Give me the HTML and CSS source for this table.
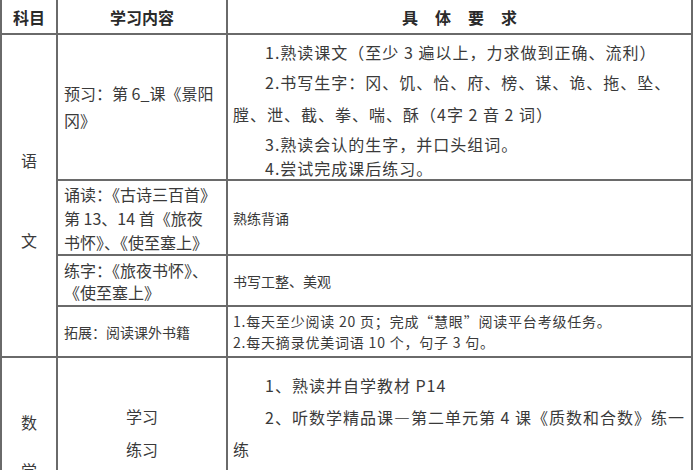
FILE: index.html
```
<!DOCTYPE html>
<html lang="zh-CN">
<head>
<meta charset="utf-8">
<title>学习内容</title>
<link rel="stylesheet" href="styles.css">
</head>
<body>
<div class="sheet">
  <div class="cell head c1">科目</div>
  <div class="cell head c2">学习内容</div>
  <div class="cell head c3 spaced">具体要求</div>

  <div class="cell subject yuwen"><span>语</span><span>文</span></div>

  <div class="cell left r1"><p class="lh27">预习：第 6_课《景阳<br>冈》</p></div>
  <div class="cell right r1">
    <p class="p1 ind">1.熟读课文（至少 3 遍以上，力求做到正确、流利）</p>
    <p class="p2"><span class="ind">2.书写生字：冈、饥、恰、府、榜、谋、诡、拖、坠、</span><br>膛、泄、截、拳、喘、酥（4字 2 音 2 词）</p>
    <p class="p3 ind">3.熟读会认的生字，并口头组词。</p>
    <p class="p4 ind">4.尝试完成课后练习。</p>
  </div>

  <div class="cell left r2"><p class="lh24">诵读：《古诗三百首》<br>第 13、14 首《旅夜<br>书怀》、《使至塞上》</p></div>
  <div class="cell right r2 small mid"><p>熟练背诵</p></div>

  <div class="cell left r3"><p class="lh22">练字：《旅夜书怀》、<br>《使至塞上》</p></div>
  <div class="cell right r3 small mid"><p>书写工整、美观</p></div>

  <div class="cell left r4 small"><p>拓展：阅读课外书籍</p></div>
  <div class="cell right r4 small mid wide"><p class="lh21">1.每天至少阅读 20 页；完成“慧眼”阅读平台考级任务。<br>2.每天摘录优美词语 10 个，句子 3 句。</p></div>

  <div class="cell subject shuxue"><span>数</span><span>学</span></div>
  <div class="cell math-mid"><p>学习<br>练习<br>巩固</p></div>
  <div class="cell math-right">
    <p class="ind">1、熟读并自学教材 P14</p>
    <p><span class="ind">2、听数学精品课—第二单元第 4 课《质数和合数》练一</span><br>练</p>
    <p class="ind">3、完成课后相关练习</p>
  </div>
</div>
</body>
</html>
```

FILE: styles.css
```
html, body {
  margin: 0;
  padding: 0;
  background: #ffffff;
}

body {
  font-family: "Noto Sans CJK SC", "Noto Sans", sans-serif;
  color: #3a3a3a;
  font-size: 16px;
  overflow: hidden;
  height: 470px;
}

.sheet {
  display: grid;
  grid-template-columns: 54px 168px 463px;
  grid-template-rows: 33px 144px 73px 49px 49px 160px;
  gap: 2px;
  padding: 2px;
  width: max-content;
  margin-top: -2px;
  background: #6a6a6a;
}

.cell {
  background: #ffffff;
  overflow: hidden;
}

p {
  margin: 0;
}

.head {
  display: flex;
  align-items: center;
  justify-content: center;
  font-weight: 700;
  color: #2a2a2a;
  font-size: 16px;
}

.spaced {
  letter-spacing: 17px;
  padding-left: 17px;
}

.c1 { grid-column: 1; grid-row: 1; }
.c2 { grid-column: 2; grid-row: 1; }
.c3 { grid-column: 3; grid-row: 1; }

.subject {
  grid-column: 1;
  display: flex;
  flex-direction: column;
  align-items: center;
  line-height: 24px;
}

.yuwen {
  grid-row: 2 / 6;
  padding-top: 113px;
  gap: 56px;
}

.shuxue {
  grid-row: 6;
  padding-top: 52px;
  gap: 24px;
}

.left {
  grid-column: 2;
  display: flex;
  align-items: center;
  padding-left: 6px;
}

.right {
  grid-column: 3;
  padding-left: 5px;
}

.r1 { grid-row: 2; }
.r2 { grid-row: 3; }
.r3 { grid-row: 4; }
.r4 { grid-row: 5; }

.mid {
  display: flex;
  align-items: center;
}

.small {
  font-size: 14px;
}

.wide {
  letter-spacing: 0.8px;
}

.lh27 { line-height: 27px; }
.lh24 { line-height: 24px; }
.lh22 { line-height: 22px; }
.lh21 { line-height: 21px; }

.right.r1 {
  padding-top: 3px;
  letter-spacing: 1px;
}

.ind {
  padding-left: 32px;
}

.p1 { line-height: 28px; }
.p2 { line-height: 32px; }
.p3 { line-height: 28px; }
.p4 { line-height: 20px; }

.math-mid {
  grid-column: 2;
  grid-row: 6;
  text-align: center;
  line-height: 33px;
  padding-top: 42px;
}

.math-right {
  grid-column: 3;
  grid-row: 6;
  padding-left: 5px;
  padding-top: 11px;
  line-height: 32px;
  letter-spacing: 1px;
}
```
